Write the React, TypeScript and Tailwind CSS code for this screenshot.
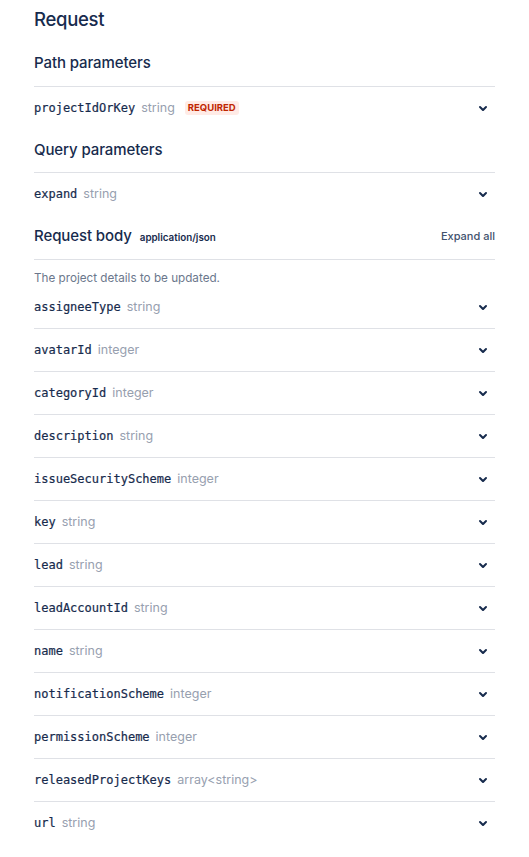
import React from "react";

const sans = { fontFamily: "Inter, 'Noto Sans', sans-serif" };

function Chevron() {
  return (
    <span className="flex h-6 w-6 items-center justify-center">
      <svg width="24" height="24" viewBox="0 0 24 24" fill="#172b4d">
        <path d="M8.292 10.293a1.009 1.009 0 000 1.419l2.939 2.965c.218.215.5.322.779.322s.556-.107.769-.322l2.93-2.955a1.01 1.01 0 000-1.419.987.987 0 00-1.406 0l-2.298 2.317-2.307-2.327a.99.99 0 00-1.406 0z" />
      </svg>
    </span>
  );
}

function ParamName({ name, type, required }: { name: string; type: string; required?: boolean }) {
  return (
    <div className="flex items-center">
      <span className="font-['DejaVu_Sans_Mono',monospace] text-[12px] font-normal text-[#172b4d] [-webkit-text-stroke:0.2px_#172b4d]">
        {name}
      </span>
      <span className="ml-[6px] text-[12.5px] text-[#97a0af]">{type}</span>
      {required && (
        <span className="ml-[10px] rounded-[3px] bg-[#ffebe6] px-[3px] text-[9.5px] font-bold leading-[14px] text-[#bf2600]">
          REQUIRED
        </span>
      )}
    </div>
  );
}

function Row({ name, type, required, first }: { name: string; type: string; required?: boolean; first?: boolean }) {
  return (
    <div className={`flex items-center justify-between ${first ? "h-[42px]" : "h-[43px] border-t border-[#dfe1e6]"}`}>
      <ParamName name={name} type={type} required={required} />
      <Chevron />
    </div>
  );
}

const bodyParams: [string, string][] = [
  ["avatarId", "integer"],
  ["categoryId", "integer"],
  ["description", "string"],
  ["issueSecurityScheme", "integer"],
  ["key", "string"],
  ["lead", "string"],
  ["leadAccountId", "string"],
  ["name", "string"],
  ["notificationScheme", "integer"],
  ["permissionScheme", "integer"],
  ["releasedProjectKeys", "array<string>"],
  ["url", "string"],
];

export default function App() {
  return (
    <div className="min-h-[857px] w-[529px] bg-white px-[34px]" style={sans}>
      <div className="flex h-[40px] items-center text-[18.5px] font-medium tracking-[-0.3px] text-[#172b4d]">Request</div>
      <div className="flex h-[46px] items-center text-[15px] font-medium tracking-[-0.1px] text-[#172b4d]">Path parameters</div>
      <Row name="projectIdOrKey" type="string" required />
      <div className="flex h-[43px] items-center pb-[1px] text-[15px] font-medium tracking-[-0.1px] text-[#172b4d]">
        Query parameters
      </div>
      <Row name="expand" type="string" />
      <div className="flex h-[44px] items-center justify-between pb-[2px]">
        <div className="flex items-baseline">
          <span className="text-[15px] font-medium tracking-[-0.1px] text-[#172b4d]">Request body</span>
          <span className="ml-[8px] text-[9.8px] font-semibold text-[#172b4d]">application/json</span>
        </div>
        <span className="text-[11px] font-medium text-[#42526e]">Expand all</span>
      </div>
      <div className="border-t border-[#dfe1e6] pt-[10px] text-[11.7px] leading-[16px] text-[#6b778c]">
        The project details to be updated.
      </div>
      <Row name="assigneeType" type="string" first />
      {bodyParams.map(([n, t]) => (
        <Row key={n} name={n} type={t} />
      ))}
    </div>
  );
}
